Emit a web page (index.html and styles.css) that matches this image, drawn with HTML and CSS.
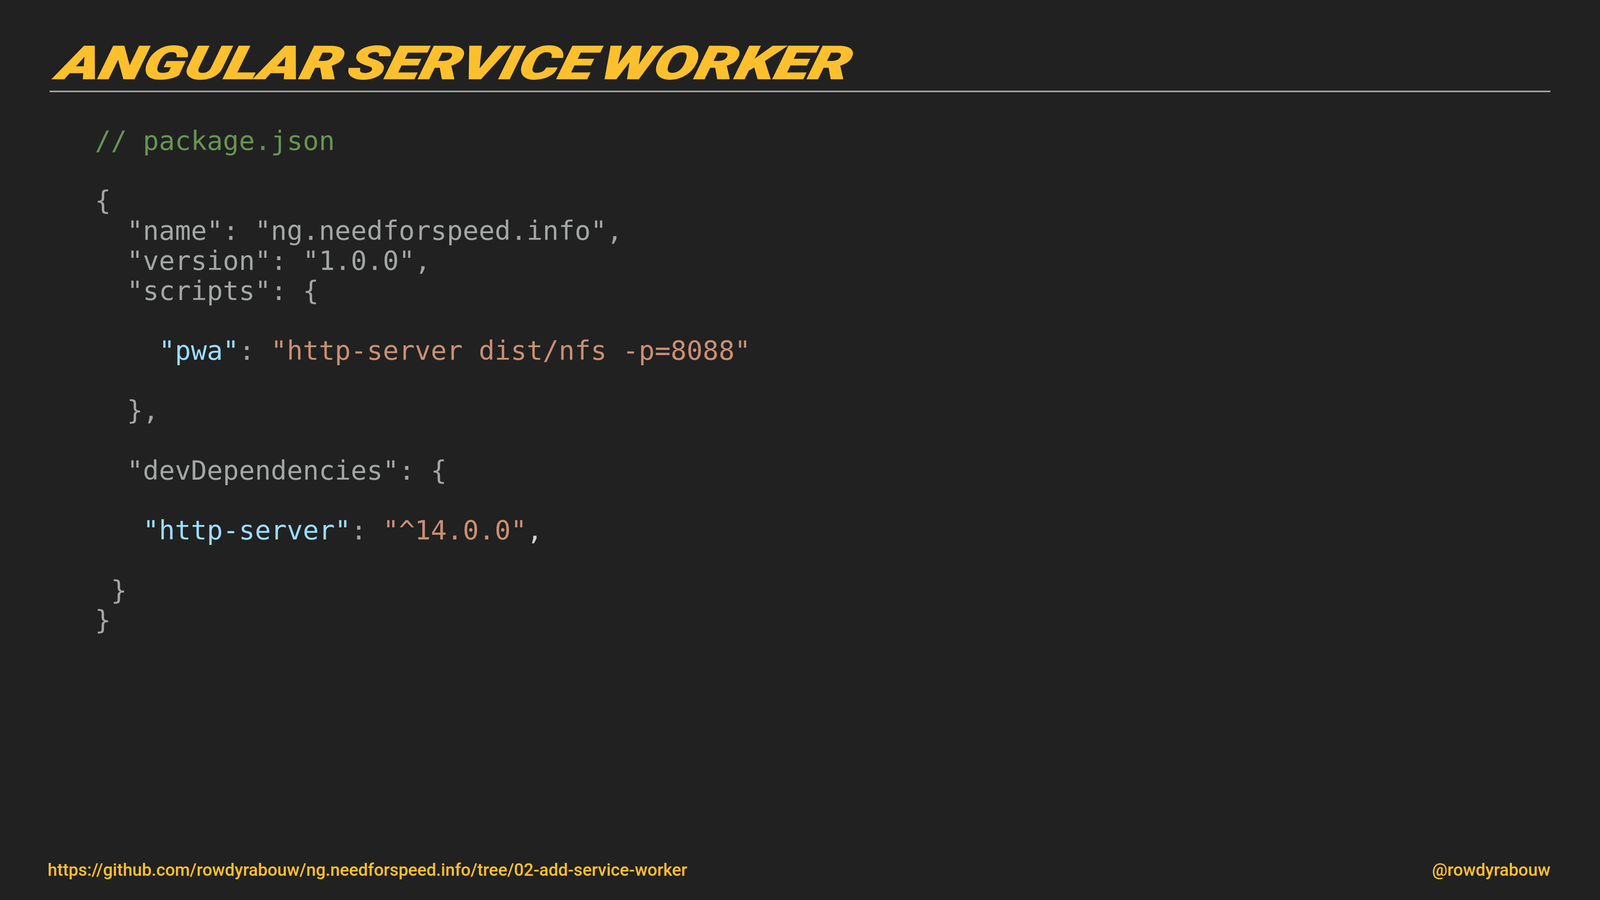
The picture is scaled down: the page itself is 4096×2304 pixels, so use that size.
FILE: index.html
```html
<!DOCTYPE html>
<html lang="en">
<head>
<meta charset="utf-8">
<title>Angular Service Worker</title>
<link rel="stylesheet" href="styles.css">
</head>
<body>
<main class="slide">
<header class="head"><h1 class="title">ANGULAR SERVICE WORKER</h1></header>
<pre class="code"><span class="cm">// package.json</span>

{
  "name": "ng.needforspeed.info",
  "version": "1.0.0",
  "scripts": {

    <span class="key">"pwa"</span>: <span class="str">"http-server dist/nfs -p=8088"</span>

  },

  "devDependencies": {

   <span class="key">"http-server"</span>: <span class="str">"^14.0.0"</span><span class="comma">,</span>

 }
}</pre>
<footer class="foot"><span class="url">https://github.com/rowdyrabouw/ng.needforspeed.info/tree/02-add-service-worker</span><span class="handle">@rowdyrabouw</span></footer>
</main>
</body>
</html>
```
FILE: styles.css
```css
html, body { margin: 0; padding: 0; background: #212121; }
.slide { height: 2304px; display: flex; flex-direction: column; box-sizing: border-box; padding: 0 127px 0 122px; overflow: hidden; }
.head { margin-left: 5px; padding-top: 102px; padding-bottom: 10px; border-bottom: 4px solid #a3a6a6; }
.title { margin: 0 0 0 11px; font: italic 900 118px/120px Roboto, sans-serif; word-spacing: -16px; color: #fcc02e; -webkit-text-stroke: 2px #fcc02e; transform: skewX(-14deg) scaleX(1.37); transform-origin: 0 100%; }
.code { margin: 87px 0 0 121px; font: 400 68px/76.7px "DejaVu Sans Mono", monospace; color: #a3a6a6; }
.cm { color: #659552; }
.key { color: #9cdcfe; }
.str { color: #c98f74; }
.comma { color: #d4d4d4; }
.foot { margin-top: auto; padding-bottom: 47px; display: flex; justify-content: space-between; font: 500 43.9px/60px Roboto, sans-serif; color: #fcc02e; }
```
